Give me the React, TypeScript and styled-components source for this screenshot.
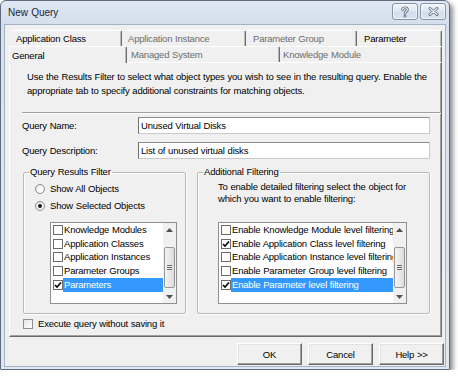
import React from "react";
import styled, { createGlobalStyle, css } from "styled-components";

const GlobalStyle = createGlobalStyle`
  html, body { margin: 0; padding: 0; background: #ffffff; }
  body {
    font-family: "Liberation Sans", Arial, sans-serif;
    font-size: 9.5px;
    letter-spacing: -0.2px;
    word-spacing: 0.35px;
    color: #000;
  }
  *, *::before, *::after { box-sizing: border-box; }
`;

const Window = styled.div`
  width: 450px;
  height: 370px;
  display: flex;
  flex-direction: column;
  padding: 0 3px 2px;
  border: 1px solid #5d6b7d;
  border-radius: 6px 6px 1px 1px;
  background: linear-gradient(180deg, #dfe8f3 0px, #d3dfed 23px, #d9e3ef 60px, #dfe7f0 100%);
  box-shadow: 3px 3px 5px rgba(0, 0, 0, 0.45);
`;

const TitleBar = styled.div`
  flex: none;
  height: 23px;
  display: flex;
  align-items: flex-start;
  justify-content: space-between;
  padding-left: 4px;
`;

const TitleText = styled.div`
  font-size: 10px;
  letter-spacing: 0;
  line-height: 23px;
  color: #1b2533;
`;

const CaptionButtons = styled.div`
  display: flex;
  gap: 2px;
  margin-top: 2px;
`;

const CaptionButton = styled.div`
  width: 26px;
  height: 17px;
  border: 1px solid #8594a8;
  border-radius: 3px;
  background: linear-gradient(180deg, #eef3f9 0%, #e0e8f2 48%, #d2deeb 52%, #dbe5f0 100%);
  box-shadow: inset 0 0 0 1px rgba(255, 255, 255, 0.55);
  display: flex;
  align-items: center;
  justify-content: center;
`;

const Client = styled.div`
  flex: 1;
  display: flex;
  flex-direction: column;
  background: #f0f0f0;
  border: 1px solid #a3b2c5;
  padding: 5px 3px 1px 4px;
`;

const TabRow = styled.div<{ $indent: number }>`
  display: flex;
  height: 16px;
  margin-left: ${(p) => p.$indent}px;
  position: relative;
`;

const Tab = styled.div<{ $w: number; $pad: number; $dim?: boolean; $active?: boolean }>`
  flex: none;
  width: ${(p) => p.$w}px;
  padding-left: ${(p) => p.$pad}px;
  display: flex;
  align-items: center;
  white-space: nowrap;
  overflow: hidden;
  color: ${(p) => (p.$dim ? "#6d6d6d" : "#000")};
  background: #f0f0f0;
  border-top: 1px solid #ffffff;
  border-right: 1px solid #6e6e6e;
  box-shadow: inset -1px 0 0 #b9b9b9;
  border-top-right-radius: 2px;
  ${(p) =>
    p.$active &&
    css`
      border-left: 1px solid #ffffff;
      height: 17px;
      margin-bottom: -1px;
      z-index: 1;
    `}
`;

const Panel = styled.div`
  flex: none;
  width: 433px;
  height: 275px;
  display: flex;
  flex-direction: column;
  border-top: 1px solid #ffffff;
  border-left: 1px solid #ffffff;
  border-right: 1px solid #6a6a6a;
  border-bottom: 1px solid #6a6a6a;
  box-shadow: inset -1px -1px 0 #a0a0a0;
`;

const Intro = styled.div`
  padding: 7px 0 0 17px;
  line-height: 14px;
  white-space: nowrap;
`;

const Separator = styled.div`
  margin: 14px 0 0 12px;
  height: 2px;
  border-top: 1px solid #a0a0a0;
  border-bottom: 1px solid #ffffff;
`;

const FieldRow = styled.div<{ $gap: number }>`
  display: flex;
  align-items: center;
  height: 17px;
  margin: ${(p) => p.$gap}px 0 0 12px;
`;

const FieldLabel = styled.div`
  width: 116px;
  white-space: nowrap;
`;

const TextBox = styled.input`
  width: 292px;
  height: 17px;
  margin: 0;
  padding: 0 0 0 2px;
  font: inherit;
  letter-spacing: inherit;
  word-spacing: inherit;
  color: #000;
  background: #ffffff;
  border: 1px solid #c9c9c9;
  border-top-color: #8d8d8d;
  border-left-color: #6f6f6f;
  outline: none;
`;

const Groups = styled.div`
  display: flex;
  gap: 11px;
  margin: 7px 0 0 13px;
`;

const GroupBox = styled.fieldset<{ $w: number }>`
  width: ${(p) => p.$w}px;
  height: 148px;
  margin: 0;
  padding: 0;
  min-width: 0;
  border: 1px solid #b9b9b9;
  border-radius: 2px;
  box-shadow: inset 1px 1px 0 #ffffff, 1px 1px 0 #ffffff;
`;

const Legend = styled.legend`
  margin-left: 5px;
  padding: 0 1px;
  line-height: 12px;
`;

const RadioGroup = styled.div`
  padding: 2px 0 0 11px;
`;

const RadioRow = styled.div`
  display: flex;
  align-items: center;
  gap: 5px;
  height: 17px;
`;

const RadioCircle = styled.span<{ $on?: boolean }>`
  width: 10px;
  height: 10px;
  border-radius: 50%;
  border: 1px solid #8b8b8b;
  background: radial-gradient(circle at 65% 65%, #ffffff 0%, #f4f4f4 50%, #dcdcdc 100%);
  display: flex;
  align-items: center;
  justify-content: center;
  &::after {
    content: "";
    width: 4px;
    height: 4px;
    border-radius: 50%;
    background: ${(p) => (p.$on ? "#1a1a1a" : "transparent")};
  }
`;

const InfoText = styled.div`
  padding: 3px 0 0 20px;
  line-height: 12px;
  white-space: nowrap;
`;

const ListBox = styled.div<{ $w: number; $top: number; $left: number }>`
  width: ${(p) => p.$w}px;
  height: 82px;
  margin: ${(p) => p.$top}px 0 0 ${(p) => p.$left}px;
  display: flex;
  background: #ffffff;
  border: 1px solid #8c8f94;
`;

const ListItems = styled.div`
  flex: 1;
  min-width: 0;
  overflow: hidden;
  padding-left: 2px;
`;

const ListItem = styled.div`
  display: flex;
  align-items: center;
  height: 13.7px;
`;

const CheckBox = styled.span<{ $soft?: boolean }>`
  flex: none;
  width: 10px;
  height: 10px;
  display: flex;
  align-items: center;
  justify-content: center;
  background: ${(p) => (p.$soft ? "linear-gradient(135deg, #e6e6e6, #ffffff)" : "#ffffff")};
  border: 1px solid ${(p) => (p.$soft ? "#8e8e8e" : "#6b6b6b")};
`;

const ItemLabel = styled.span<{ $selected?: boolean }>`
  flex: 1;
  min-width: 0;
  height: 14px;
  line-height: 14px;
  padding-left: 1px;
  white-space: nowrap;
  overflow: hidden;
  background: ${(p) => (p.$selected ? "#3399ff" : "transparent")};
  color: ${(p) => (p.$selected ? "#ffffff" : "#000")};
`;

const ScrollBar = styled.div`
  flex: none;
  width: 13px;
  display: flex;
  flex-direction: column;
  background: #f0f0f0;
`;

const ScrollArrow = styled.div`
  flex: none;
  height: 13px;
  display: flex;
  align-items: center;
  justify-content: center;
`;

const ScrollTrack = styled.div<{ $offset: number }>`
  flex: 1;
  padding-top: ${(p) => p.$offset}px;
`;

const Thumb = styled.div<{ $size: number }>`
  height: ${(p) => p.$size}px;
  margin: 0 1px;
  border: 1px solid #979797;
  border-radius: 2px;
  background: linear-gradient(90deg, #f3f3f3 0%, #e9e9e9 50%, #dcdcdc 100%);
  display: flex;
  flex-direction: column;
  align-items: center;
  justify-content: center;
  gap: 1px;
`;

const GripLine = styled.span`
  width: 5px;
  height: 1px;
  background: #6a6a6a;
`;

const CheckRow = styled.div`
  display: flex;
  align-items: center;
  gap: 5px;
  height: 13px;
  margin: 3px 0 0 13px;
  white-space: nowrap;
`;

const ButtonRow = styled.div`
  display: flex;
  justify-content: flex-end;
  gap: 6px;
  margin: 6px -2px 0 0;
`;

const PushButton = styled.div`
  width: 65px;
  height: 22px;
  display: flex;
  align-items: center;
  justify-content: center;
  background: #f0f0f0;
  border-top: 1px solid #ffffff;
  border-left: 1px solid #ffffff;
  border-right: 1px solid #696969;
  border-bottom: 1px solid #696969;
  box-shadow: inset -1px -1px 0 #a0a0a0, inset 1px 1px 0 #e3e3e3;
`;

const CheckMark = () => (
  <svg width="8" height="8" viewBox="0 0 8 8">
    <path d="M1 4 L3 6 L7 1.5" fill="none" stroke="#000" strokeWidth="1.6" />
  </svg>
);

const Arrow = ({ up }: { up?: boolean }) => (
  <svg width="7" height="4" viewBox="0 0 7 4">
    <path d={up ? "M0 4 L3.5 0 L7 4 Z" : "M0 0 L3.5 4 L7 0 Z"} fill="#505050" />
  </svg>
);

const HelpGlyph = () => (
  <svg width="10" height="12" viewBox="0 0 10 12">
    <g fill="none" strokeLinecap="round">
      <path d="M2.6 3.6 C2.6 1.2 7.4 1.2 7.4 3.7 C7.4 5.5 5 5.3 5 7.4" stroke="#5f6d7e" strokeWidth="2.8" />
      <path d="M2.6 3.6 C2.6 1.2 7.4 1.2 7.4 3.7 C7.4 5.5 5 5.3 5 7.4" stroke="#f7f9fc" strokeWidth="1.1" />
    </g>
    <circle cx="5" cy="10.2" r="1.4" fill="#5f6d7e" />
    <circle cx="5" cy="10.2" r="0.6" fill="#f7f9fc" />
  </svg>
);

const CloseGlyph = () => (
  <svg width="11" height="9" viewBox="0 0 11 9">
    <g strokeLinecap="round">
      <path d="M2 1.5 L9 7.5 M9 1.5 L2 7.5" stroke="#5f6d7e" strokeWidth="2.8" />
      <path d="M2 1.5 L9 7.5 M9 1.5 L2 7.5" stroke="#f7f9fc" strokeWidth="1.1" />
    </g>
  </svg>
);

type TabDef = { label: string; w: number; pad: number; dim?: boolean; active?: boolean };

const topTabs: TabDef[] = [
  { label: "Application Class", w: 109, pad: 3 },
  { label: "Application Instance", w: 124, pad: 6, dim: true },
  { label: "Parameter Group", w: 111, pad: 7, dim: true },
  { label: "Parameter", w: 85, pad: 7 },
];

const bottomTabs: TabDef[] = [
  { label: "General", w: 118, pad: 2, active: true },
  { label: "Managed System", w: 153, pad: 4, dim: true },
  { label: "Knowledge Module", w: 162, pad: 3, dim: true },
];

type Item = { label: string; checked: boolean; selected?: boolean };

const objectItems: Item[] = [
  { label: "Knowledge Modules", checked: false },
  { label: "Application Classes", checked: false },
  { label: "Application Instances", checked: false },
  { label: "Parameter Groups", checked: false },
  { label: "Parameters", checked: true, selected: true },
];

const filterItems: Item[] = [
  { label: "Enable Knowledge Module level filtering", checked: false },
  { label: "Enable Application Class level filtering", checked: true },
  { label: "Enable Application Instance level filtering", checked: false },
  { label: "Enable Parameter Group level filtering", checked: false },
  { label: "Enable Parameter level filtering", checked: true, selected: true },
];

const CheckList = ({ items, w, top, left }: { items: Item[]; w: number; top: number; left: number }) => (
  <ListBox $w={w} $top={top} $left={left}>
    <ListItems>
      {items.map((it) => (
        <ListItem key={it.label}>
          <CheckBox>{it.checked && <CheckMark />}</CheckBox>
          <ItemLabel $selected={it.selected}>{it.label}</ItemLabel>
        </ListItem>
      ))}
    </ListItems>
    <ScrollBar>
      <ScrollArrow>
        <Arrow up />
      </ScrollArrow>
      <ScrollTrack $offset={11}>
        <Thumb $size={41}>
          <GripLine />
          <GripLine />
          <GripLine />
        </Thumb>
      </ScrollTrack>
      <ScrollArrow>
        <Arrow />
      </ScrollArrow>
    </ScrollBar>
  </ListBox>
);

export default function App() {
  return (
    <>
      <GlobalStyle />
      <Window>
        <TitleBar>
          <TitleText>New Query</TitleText>
          <CaptionButtons>
            <CaptionButton>
              <HelpGlyph />
            </CaptionButton>
            <CaptionButton>
              <CloseGlyph />
            </CaptionButton>
          </CaptionButtons>
        </TitleBar>
        <Client>
          <TabRow $indent={4}>
            {topTabs.map((t) => (
              <Tab key={t.label} $w={t.w} $pad={t.pad} $dim={t.dim} $active={t.active}>
                {t.label}
              </Tab>
            ))}
          </TabRow>
          <TabRow $indent={0}>
            {bottomTabs.map((t) => (
              <Tab key={t.label} $w={t.w} $pad={t.pad} $dim={t.dim} $active={t.active}>
                {t.label}
              </Tab>
            ))}
          </TabRow>
          <Panel>
            <Intro>
              Use the Results Filter to select what object types you wish to see in the resulting query. Enable the
              <br />
              appropriate tab to specify additional constraints for matching objects.
            </Intro>
            <Separator />
            <FieldRow $gap={3}>
              <FieldLabel>Query Name:</FieldLabel>
              <TextBox readOnly value="Unused Virtual Disks" />
            </FieldRow>
            <FieldRow $gap={8}>
              <FieldLabel>Query Description:</FieldLabel>
              <TextBox readOnly value="List of unused virtual disks" />
            </FieldRow>
            <Groups>
              <GroupBox $w={163}>
                <Legend>Query Results Filter</Legend>
                <RadioGroup>
                  <RadioRow>
                    <RadioCircle />
                    Show All Objects
                  </RadioRow>
                  <RadioRow>
                    <RadioCircle $on />
                    Show Selected Objects
                  </RadioRow>
                </RadioGroup>
                <CheckList items={objectItems} w={127} top={8} left={26} />
              </GroupBox>
              <GroupBox $w={233}>
                <Legend>Additional Filtering</Legend>
                <InfoText>
                  To enable detailed filtering select the object for
                  <br />
                  which you want to enable filtering:
                </InfoText>
                <CheckList items={filterItems} w={189} top={17} left={20} />
              </GroupBox>
            </Groups>
            <CheckRow>
              <CheckBox $soft />
              Execute query without saving it
            </CheckRow>
          </Panel>
          <ButtonRow>
            <PushButton>OK</PushButton>
            <PushButton>Cancel</PushButton>
            <PushButton>Help &gt;&gt;</PushButton>
          </ButtonRow>
        </Client>
      </Window>
    </>
  );
}
